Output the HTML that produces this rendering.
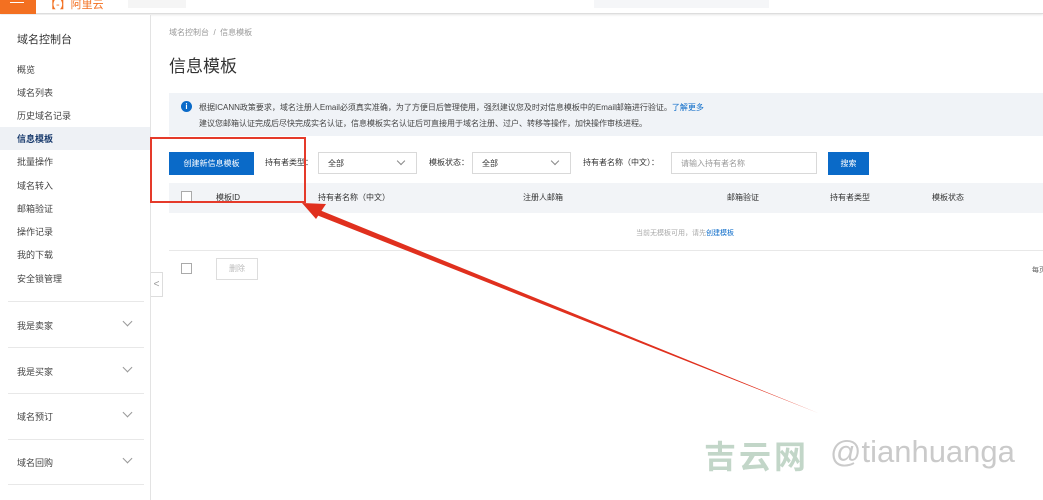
<!DOCTYPE html>
<html><head><meta charset="utf-8"><style>
*{margin:0;padding:0;box-sizing:border-box}
body{width:1043px;height:500px;overflow:hidden;background:#fff;font-family:"Liberation Sans","Noto Sans CJK SC",sans-serif;color:#333;position:relative;font-size:9px}
.a{position:absolute;white-space:nowrap}
.top{position:absolute;left:0;top:0;width:1043px;height:14px;background:#fff;border-bottom:1px solid #ddd;box-shadow:0 1px 2px #e6e6e6}
.side{position:absolute;left:0;top:15px;width:151px;height:485px;border-right:1px solid #e3e3e3;background:#fff}
.nav{position:absolute;left:17px;font-size:9px;color:#444}
.sep{position:absolute;left:8px;width:136px;height:1px;background:#e8e8e8}
.chev{position:absolute;left:124px;width:7px;height:7px;border-right:1px solid #999;border-bottom:1px solid #999;transform:rotate(45deg)}
.sel{position:absolute;border:1px solid #d9d9d9;height:22px;background:#fff}
.sel .c{position:absolute;right:12px;top:5px;width:6px;height:6px;border-right:1px solid #888;border-bottom:1px solid #888;transform:rotate(45deg)}
.cb{position:absolute;width:11px;height:11px;border:1px solid #aaa;background:#fff}
</style></head><body>
<div class="top"></div>
<div class="a" style="left:0;top:0;width:36px;height:14px;background:#f37021"></div>
<div class="a" style="left:10px;top:2px;width:14px;height:1px;background:#fff"></div>
<div class="a" style="left:45px;top:-4px;font-size:11px;color:#f37021">【-】阿里云</div>
<div class="a" style="left:128px;top:0;width:58px;height:8px;background:#f5f5f5"></div>
<div class="a" style="left:594px;top:0;width:175px;height:8px;background:#f5f6f8"></div>

<div class="side">
<div class="nav" style="top:16px;font-size:11px;color:#333">域名控制台</div>
<div class="nav" style="top:48px">概览</div>
<div class="nav" style="top:71px">域名列表</div>
<div class="nav" style="top:94px">历史域名记录</div>
<div class="a" style="left:0;top:112px;width:150px;height:23px;background:#eef1f5"></div>
<div class="nav" style="top:117px;color:#1a3c6e;font-weight:bold">信息模板</div>
<div class="nav" style="top:140px">批量操作</div>
<div class="nav" style="top:164px">域名转入</div>
<div class="nav" style="top:187px">邮箱验证</div>
<div class="nav" style="top:210px">操作记录</div>
<div class="nav" style="top:233px">我的下载</div>
<div class="nav" style="top:257px">安全锁管理</div>
<div class="sep" style="top:286px"></div>
<div class="nav" style="top:304px">我是卖家</div><div class="chev" style="top:303px"></div>
<div class="sep" style="top:332px"></div>
<div class="nav" style="top:350px">我是买家</div><div class="chev" style="top:349px"></div>
<div class="sep" style="top:378px"></div>
<div class="nav" style="top:395px">域名预订</div><div class="chev" style="top:394px"></div>
<div class="sep" style="top:424px"></div>
<div class="nav" style="top:441px">域名回购</div><div class="chev" style="top:440px"></div>
<div class="sep" style="top:469px"></div>
</div>
<div class="a" style="left:151px;top:272px;width:12px;height:25px;border:1px solid #ddd;border-left:none;background:#fff;color:#999;font-size:10px;line-height:23px;text-align:center">&lt;</div>

<div class="a" style="left:169px;top:27px;color:#999;font-size:8px">域名控制台 &nbsp;/&nbsp; 信息模板</div>
<div class="a" style="left:169px;top:52px;font-size:17px;color:#333">信息模板</div>

<div class="a" style="left:169px;top:93px;width:874px;height:43px;background:#f0f3f7"></div>
<div class="a" style="left:181px;top:101px;width:11px;height:11px;border-radius:50%;background:#0a6ac8;color:#fff;font-size:8px;line-height:11px;text-align:center;font-weight:bold">i</div>
<div class="a" style="left:199px;top:102px;font-size:8px;color:#444">根据ICANN政策要求，域名注册人Email必须真实准确，为了方便日后管理使用，强烈建议您及时对信息模板中的Email邮箱进行验证。<span style="color:#0a6ac8">了解更多</span></div>
<div class="a" style="left:199px;top:118px;font-size:8px;color:#444">建议您邮箱认证完成后尽快完成实名认证，信息模板实名认证后可直接用于域名注册、过户、转移等操作，加快操作审核进程。</div>

<div class="a" style="left:169px;top:152px;width:85px;height:23px;background:#0a6ac8;color:#fff;font-size:8px;line-height:23px;text-align:center">创建新信息模板</div>
<div class="a" style="left:265px;top:157px;font-size:8px">持有者类型：</div>
<div class="sel" style="left:318px;top:152px;width:99px"><span class="a" style="left:9px;top:5px;font-size:8px">全部</span><div class="c"></div></div>
<div class="a" style="left:429px;top:157px;font-size:8px">模板状态：</div>
<div class="sel" style="left:472px;top:152px;width:99px"><span class="a" style="left:9px;top:5px;font-size:8px">全部</span><div class="c"></div></div>
<div class="a" style="left:583px;top:157px;font-size:8px">持有者名称（中文）：</div>
<div class="sel" style="left:671px;top:152px;width:146px"><span class="a" style="left:9px;top:5px;font-size:8px;color:#999">请输入持有者名称</span></div>
<div class="a" style="left:828px;top:152px;width:41px;height:23px;background:#0a6ac8;color:#fff;font-size:8px;line-height:23px;text-align:center">搜索</div>

<div class="a" style="left:169px;top:183px;width:874px;height:30px;background:#f2f4f7"></div>
<div class="cb" style="left:181px;top:191px"></div>
<div class="a" style="left:216px;top:192px;font-size:8px">模板ID</div>
<div class="a" style="left:318px;top:192px;font-size:8px">持有者名称（中文）</div>
<div class="a" style="left:523px;top:192px;font-size:8px">注册人邮箱</div>
<div class="a" style="left:727px;top:192px;font-size:8px">邮箱验证</div>
<div class="a" style="left:830px;top:192px;font-size:8px">持有者类型</div>
<div class="a" style="left:932px;top:192px;font-size:8px">模板状态</div>
<div class="a" style="left:636px;top:228px;font-size:7px;color:#aaa">当前无模板可用，请先<span style="color:#0a6ac8">创建模板</span></div>
<div class="a" style="left:169px;top:250px;width:874px;height:1px;background:#e8e8e8"></div>
<div class="cb" style="left:181px;top:263px"></div>
<div class="a" style="left:216px;top:258px;width:42px;height:22px;border:1px solid #ddd;color:#bbb;font-size:8px;line-height:20px;text-align:center">删除</div>
<div class="a" style="left:1032px;top:265px;font-size:7px;color:#666">每页</div>

<svg class="a" style="left:0;top:0" width="1043" height="500">
<rect x="151" y="138" width="154" height="64" fill="none" stroke="#e53a2a" stroke-width="2"/>
<polygon points="818,413 314,214 317,209" fill="#e0301e"/>
<polygon points="302,203 326,204 316,219" fill="#e0301e"/>
</svg>
<div class="a" style="left:704px;top:432px;font-size:32px;letter-spacing:3px;color:#c2d6c8;font-weight:bold">吉云网</div>
<div class="a" style="left:830px;top:434px;font-size:31px;color:#cacaca">@tianhuanga</div>
</body></html>
